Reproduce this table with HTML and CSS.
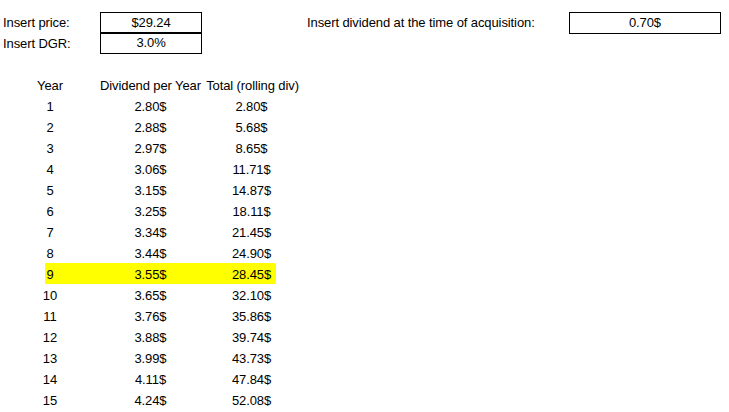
FILE: index.html
```html
<!DOCTYPE html>
<html>
<head>
<meta charset="utf-8">
<link rel="stylesheet" href="styles.css">
</head>
<body>
<div class="sheet">
  <div class="inputs">
    <div class="label">Insert price:</div>
    <div class="box">$29.24</div>
    <div class="label label-wide">Insert dividend at the time of acquisition:</div>
    <div class="box box-wide">0.70$</div>
    <div class="label">Insert DGR:</div>
    <div class="box box-second">3.0%</div>
  </div>
  <div class="table">
    <div class="row head"><div>Year</div><div>Dividend per Year</div><div>Total (rolling div)</div></div>
    <div class="row"><div>1</div><div>2.80$</div><div>2.80$</div></div>
    <div class="row"><div>2</div><div>2.88$</div><div>5.68$</div></div>
    <div class="row"><div>3</div><div>2.97$</div><div>8.65$</div></div>
    <div class="row"><div>4</div><div>3.06$</div><div>11.71$</div></div>
    <div class="row"><div>5</div><div>3.15$</div><div>14.87$</div></div>
    <div class="row"><div>6</div><div>3.25$</div><div>18.11$</div></div>
    <div class="row"><div>7</div><div>3.34$</div><div>21.45$</div></div>
    <div class="row"><div>8</div><div>3.44$</div><div>24.90$</div></div>
    <div class="row marked"><div>9</div><div>3.55$</div><div>28.45$</div></div>
    <div class="row"><div>10</div><div>3.65$</div><div>32.10$</div></div>
    <div class="row"><div>11</div><div>3.76$</div><div>35.86$</div></div>
    <div class="row"><div>12</div><div>3.88$</div><div>39.74$</div></div>
    <div class="row"><div>13</div><div>3.99$</div><div>43.73$</div></div>
    <div class="row"><div>14</div><div>4.11$</div><div>47.84$</div></div>
    <div class="row"><div>15</div><div>4.24$</div><div>52.08$</div></div>
  </div>
</div>
</body>
</html>
```
FILE: styles.css
```css
html, body {
  margin: 0;
  padding: 0;
  background: #ffffff;
}
.sheet {
  padding-top: 12px;
  font-family: "Liberation Sans", Arial, sans-serif;
  font-size: 13px;
  letter-spacing: -0.1px;
  color: #000;
}
.inputs {
  display: grid;
  grid-template-columns: 100px 102px 367px 152px;
  grid-template-rows: 21px 21px;
}
.label {
  padding-left: 3px;
  padding-top: 2px;
  line-height: 17px;
  height: 21px;
  box-sizing: border-box;
  white-space: nowrap;
}
.label-wide {
  padding-left: 105px;
}
.box {
  border: 1px solid #000;
  height: 22px;
  box-sizing: border-box;
  text-align: center;
  padding-top: 1px;
  line-height: 17px;
}
.box-second {
  margin-top: -1px;
}
.table {
  margin-top: 21px;
  width: 302px;
}
.row {
  display: grid;
  grid-template-columns: 100px 101px 101px;
  height: 21px;
  position: relative;
}
.row > div {
  text-align: center;
  padding-top: 2px;
  line-height: 17px;
  white-space: nowrap;
  position: relative;
  z-index: 1;
}
.head > div:nth-child(2) {
  padding-right: 1px;
}
.head > div:nth-child(3) {
  padding-left: 2px;
}
.marked::before {
  content: "";
  position: absolute;
  left: 45px;
  width: 231px;
  top: -1px;
  height: 21px;
  background: #ffff00;
  border-radius: 1px 2px 2px 0;
}
```
